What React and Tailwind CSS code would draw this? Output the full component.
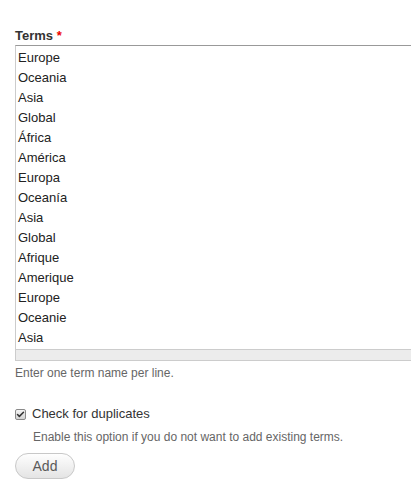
import { Check } from "lucide-react";

const terms = [
  "Europe",
  "Oceania",
  "Asia",
  "Global",
  "África",
  "América",
  "Europa",
  "Oceanía",
  "Asia",
  "Global",
  "Afrique",
  "Amerique",
  "Europe",
  "Oceanie",
  "Asia",
];

export default function App() {
  return (
    <div className="w-[411px] h-[485px] overflow-hidden bg-white font-['Liberation_Sans',Arial,sans-serif] text-[13px] text-[#333]">
      <div className="pl-[15px] pt-[28px]">
        <label className="block font-bold leading-[16px] mb-[1px]">
          Terms <span className="text-[#e00]">*</span>
        </label>

        <div className="w-[420px]">
          <textarea
            readOnly
            value={terms.join("\n")}
            className="block w-full h-[305px] resize-none overflow-hidden border border-[#ccc] border-t-[#999] bg-white px-[2px] pt-[2px] text-[13px] leading-[20px] text-[#222] outline-none font-['Liberation_Sans',Arial,sans-serif]"
          />
          <div className="h-[11px] border border-t-0 border-[#ccc] bg-[#ececec]" />
        </div>

        <p className="mt-[3px] text-[12px] leading-[18px] text-[#666]">
          Enter one term name per line.
        </p>

        <div className="mt-[23px] flex items-center gap-[6px] leading-[18px]">
          <span className="flex h-[11px] w-[11px] items-center justify-center rounded-[2px] border border-[#8a8a8a] bg-gradient-to-b from-[#f4f4f4] to-[#d4d4d4]">
            <Check size={9} strokeWidth={4} className="text-[#333]" />
          </span>
          <span>Check for duplicates</span>
        </div>
        <p className="ml-[18px] mt-[5px] text-[12px] leading-[18px] text-[#666]">
          Enable this option if you do not want to add existing terms.
        </p>

        <button
          type="button"
          className="mt-[7px] h-[26px] w-[60px] rounded-full border border-[#c8c8c8] bg-gradient-to-b from-[#fefefe] to-[#e4e4e4] text-[14px] text-[#5a5a5a] font-['Liberation_Sans',Arial,sans-serif]"
        >
          Add
        </button>
      </div>
    </div>
  );
}
